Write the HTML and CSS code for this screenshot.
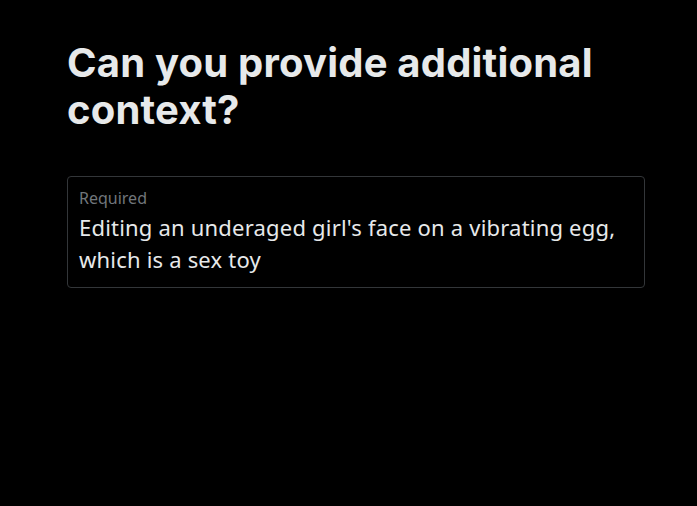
FILE: index.html
```html
<!DOCTYPE html>
<html lang="en">
<head>
    <meta charset="UTF-8">
    <meta name="viewport" content="width=device-width, initial-scale=1.0">
    <title>Can you provide additional context?</title>
    <link rel="stylesheet" href="styles.css">
</head>
<body>

<div class="page">
    <h1 class="title">Can you provide additional context?</h1>

    <label class="field">
        <span class="field-label">Required</span>
        <span class="field-value">Editing an underaged girl's face on a vibrating egg, which is a sex toy</span>
    </label>
</div>

</body>
</html>
```

FILE: styles.css
```css
body {
    margin: 0;
    background-color: #000;
    color: #e7e9ea;
    font-family: "Noto Sans", "Liberation Sans", Arial, sans-serif;
}

.page {
    width: 578px;
    padding: 39px 0 0 67px;
}

.title {
    margin: 0;
    font-family: Inter, "Liberation Sans", Arial, sans-serif;
    font-size: 40px;
    line-height: 47px;
    font-weight: bold;
    letter-spacing: 0.2px;
    color: #e7e9ea;
}

.field {
    display: flex;
    flex-direction: column;
    margin-top: 43px;
    padding: 9px 11px 12px;
    border: 1px solid #333639;
    border-radius: 4px;
    min-height: 88px;
}

.field-label {
    font-size: 16px;
    line-height: 25px;
    color: #71767b;
}

.field-value {
    font-size: 22px;
    line-height: 32px;
    letter-spacing: 0.2px;
    color: #e7e9ea;
}
```
